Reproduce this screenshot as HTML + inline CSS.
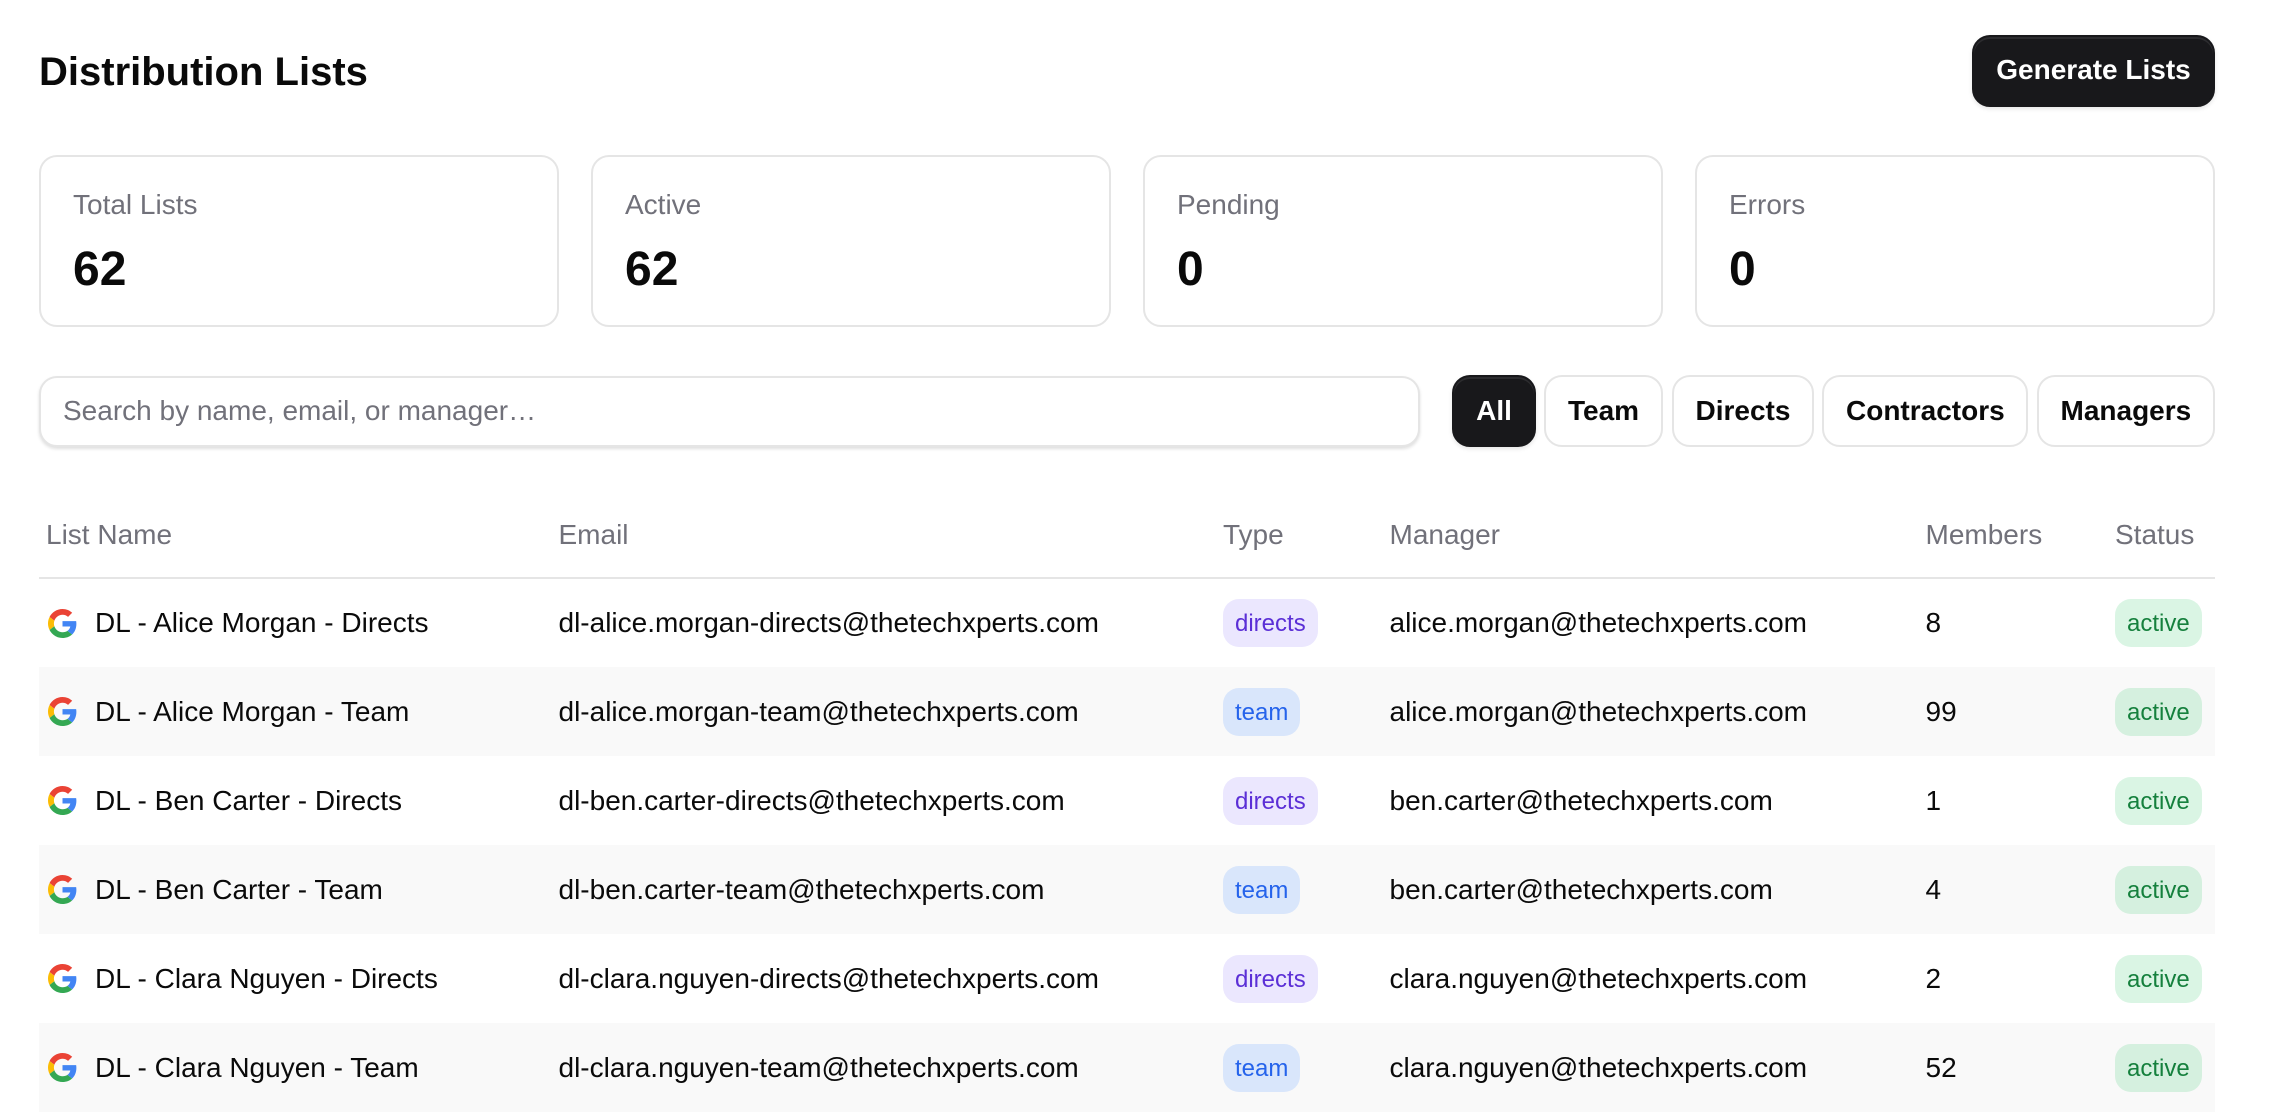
<!DOCTYPE html>
<html lang="en">
<head>
<meta charset="utf-8">
<title>Distribution Lists</title>
<style>
*{box-sizing:border-box}
html,body{margin:0;padding:0;background:#fff}
body{width:2270px;height:1114px;overflow:hidden;position:relative;font-family:"Liberation Sans",Arial,sans-serif;color:#0a0a0a}
h1{position:absolute;left:39px;top:49px;margin:0;font-size:40px;line-height:46px;font-weight:700;color:#0a0a0a}
.btn{display:block;height:72px;border:2px solid #e5e5e5;border-radius:18px;background:#fff;font:700 28px/67px "Liberation Sans",Arial,sans-serif;color:#0a0a0a;padding:0 22px;text-align:center;white-space:nowrap}
.btn.dark{background:#18181b;border-color:#18181b;color:#fff;box-shadow:inset 0 2px 0 rgba(255,255,255,.09),0 2px 4px rgba(0,0,0,.1)}
.gen{position:absolute;left:1972px;top:35px;width:243px;line-height:66px}
.card{position:absolute;top:155px;width:520px;height:172px;border:2px solid #e5e5e5;border-radius:18px;background:#fff}
.card .l{position:absolute;left:32px;top:30px;font-size:28px;line-height:36px;color:#71717a}
.card .v{position:absolute;left:32px;top:85px;font-size:48px;line-height:56px;font-weight:700;color:#0a0a0a}
.search{position:absolute;left:39px;top:376px;width:1381px;height:71px;border:2px solid #e5e5e5;border-radius:18px;background:#fff;box-shadow:0 2px 3px rgba(0,0,0,.13);font-size:28px;line-height:65px;padding-left:22px;color:#71717a;white-space:nowrap}
.f{position:absolute;top:375px}
table{position:absolute;left:39px;top:508px;width:2176px;border-collapse:collapse;table-layout:fixed}
th{height:70px;padding:0 0 16px 7px;text-align:left;font-weight:400;font-size:28px;color:#71717a;border-bottom:2px solid #e5e5e5;vertical-align:middle}
td{height:89px;padding:0 0 0 7px;font-size:28px;vertical-align:middle;color:#0a0a0a;white-space:nowrap}
tbody tr:nth-child(even){background:#f9f9f9}
.n{display:flex;align-items:center}
.n svg{width:29px;height:29px;margin:0 18px 0 2px;flex:none}
.b{display:inline-block;height:48px;line-height:49px;border-radius:16px;padding:0 12px;font-size:24px;vertical-align:middle}
.d{background:#ebe7fe;color:#5b2fd6}
.t{background:#d9e6fb;color:#2563eb}
.a{background:rgba(34,197,94,.17);color:#15803d}
</style>
</head>
<body>
<h1>Distribution Lists</h1>
<div class="btn dark gen">Generate Lists</div>

<div class="card" style="left:39px"><div class="l">Total Lists</div><div class="v">62</div></div>
<div class="card" style="left:591px"><div class="l">Active</div><div class="v">62</div></div>
<div class="card" style="left:1143px"><div class="l">Pending</div><div class="v">0</div></div>
<div class="card" style="left:1695px"><div class="l">Errors</div><div class="v">0</div></div>

<div class="search">Search by name, email, or manager…</div>
<div class="btn dark f" style="left:1452px;width:84px">All</div>
<div class="btn f" style="left:1544px;width:119px">Team</div>
<div class="btn f" style="left:1671.5px;width:142.5px">Directs</div>
<div class="btn f" style="left:1822px;width:206px">Contractors</div>
<div class="btn f" style="left:2036.5px;width:178.5px">Managers</div>

<svg width="0" height="0" style="position:absolute"><defs><symbol id="g" viewBox="0 0 48 48"><path fill="#EA4335" d="M24 9.5c3.54 0 6.71 1.22 9.21 3.6l6.85-6.85C35.9 2.38 30.47 0 24 0 14.62 0 6.51 5.38 2.56 13.22l7.98 6.19C12.43 13.72 17.74 9.5 24 9.5z"/><path fill="#4285F4" d="M46.98 24.55c0-1.57-.15-3.09-.38-4.55H24v9.02h12.94c-.58 2.96-2.26 5.48-4.78 7.18l7.73 6c4.51-4.18 7.09-10.36 7.09-17.65z"/><path fill="#FBBC05" d="M10.53 28.59c-.48-1.45-.76-2.99-.76-4.59s.27-3.14.76-4.59l-7.98-6.19C.92 16.46 0 20.12 0 24c0 3.88.92 7.54 2.56 10.78l7.97-6.19z"/><path fill="#34A853" d="M24 48c6.48 0 11.93-2.13 15.89-5.81l-7.73-6c-2.15 1.45-4.92 2.3-8.16 2.3-6.26 0-11.57-4.22-13.47-9.91l-7.98 6.19C6.51 42.62 14.62 48 24 48z"/></symbol></defs></svg>

<table>
<colgroup><col style="width:512.5px"><col style="width:664.5px"><col style="width:166.5px"><col style="width:536px"><col style="width:189.5px"><col style="width:107px"></colgroup>
<thead><tr><th>List Name</th><th>Email</th><th>Type</th><th>Manager</th><th>Members</th><th>Status</th></tr></thead>
<tbody>
<tr><td><div class="n"><svg><use href="#g"/></svg>DL - Alice Morgan - Directs</div></td><td>dl-alice.morgan-directs@thetechxperts.com</td><td><span class="b d">directs</span></td><td>alice.morgan@thetechxperts.com</td><td>8</td><td><span class="b a">active</span></td></tr>
<tr><td><div class="n"><svg><use href="#g"/></svg>DL - Alice Morgan - Team</div></td><td>dl-alice.morgan-team@thetechxperts.com</td><td><span class="b t">team</span></td><td>alice.morgan@thetechxperts.com</td><td>99</td><td><span class="b a">active</span></td></tr>
<tr><td><div class="n"><svg><use href="#g"/></svg>DL - Ben Carter - Directs</div></td><td>dl-ben.carter-directs@thetechxperts.com</td><td><span class="b d">directs</span></td><td>ben.carter@thetechxperts.com</td><td>1</td><td><span class="b a">active</span></td></tr>
<tr><td><div class="n"><svg><use href="#g"/></svg>DL - Ben Carter - Team</div></td><td>dl-ben.carter-team@thetechxperts.com</td><td><span class="b t">team</span></td><td>ben.carter@thetechxperts.com</td><td>4</td><td><span class="b a">active</span></td></tr>
<tr><td><div class="n"><svg><use href="#g"/></svg>DL - Clara Nguyen - Directs</div></td><td>dl-clara.nguyen-directs@thetechxperts.com</td><td><span class="b d">directs</span></td><td>clara.nguyen@thetechxperts.com</td><td>2</td><td><span class="b a">active</span></td></tr>
<tr><td><div class="n"><svg><use href="#g"/></svg>DL - Clara Nguyen - Team</div></td><td>dl-clara.nguyen-team@thetechxperts.com</td><td><span class="b t">team</span></td><td>clara.nguyen@thetechxperts.com</td><td>52</td><td><span class="b a">active</span></td></tr>
</tbody>
</table>
</body>
</html>
